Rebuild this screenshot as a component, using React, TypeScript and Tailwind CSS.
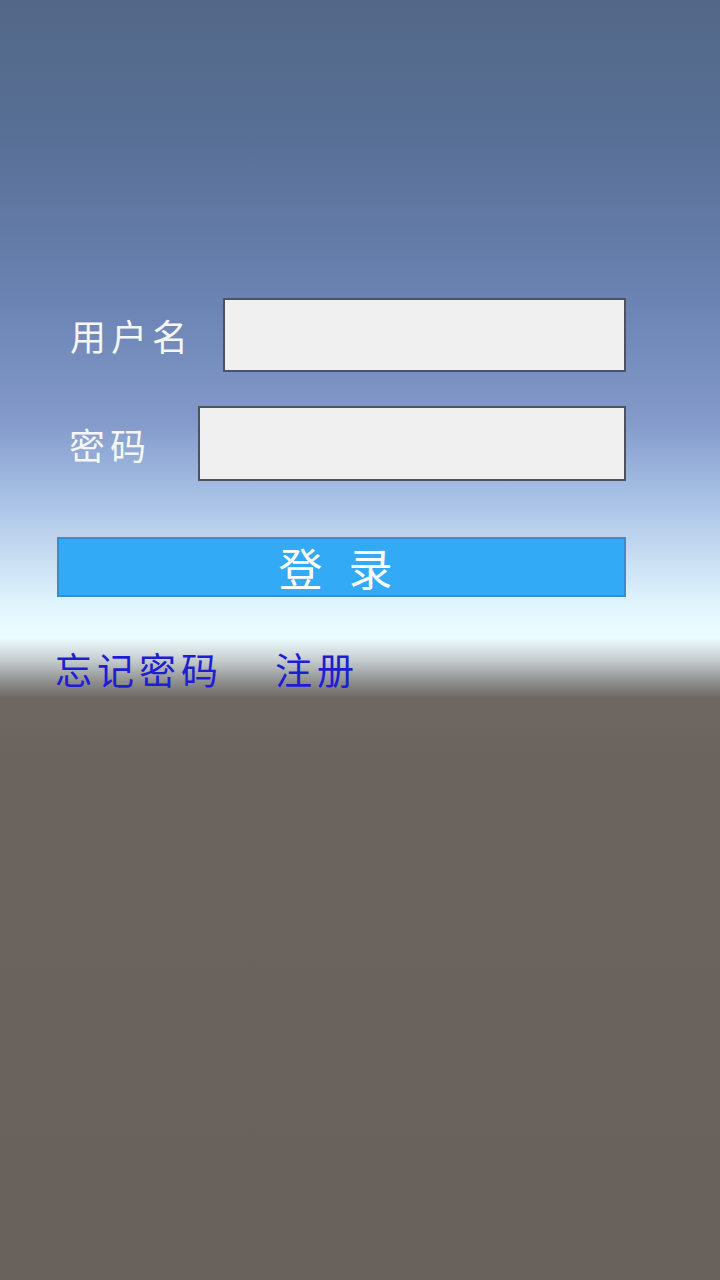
import React from 'react';

const FONT = "font-['Noto_Sans_CJK_SC','Noto_Sans',sans-serif]";

export default function App() {
  return (
    <div
      className={`${FONT} w-[720px] h-[1280px] bg-[linear-gradient(to_bottom,#536888_0px,#587096_140px,#6b83b2_300px,#8299c9_420px,#a9c2e6_500px,#c9def2_560px,#e2f7fd_610px,#edfcff_638px,#c6cdcf_660px,#8f8f8e_682px,#6e6863_698px,#6b635e_760px,#68615c_1280px)]`}
    >
      <div className="flex flex-col pt-[298px] pl-[57px] pr-[94px]">
        {/* Username */}
        <div className="flex items-center">
          <div className="w-[166px] pl-[13px] text-[36px] leading-none tracking-[5px] text-[#f4f6f8]">用户名</div>
          <input className="flex-1 h-[74px] bg-[#f0f0f0] border-2 border-[#4d535a] outline-none" />
        </div>

        {/* Password */}
        <div className="flex items-center mt-[34px]">
          <div className="w-[141px] pl-[12px] text-[36px] leading-none tracking-[5px] text-[#f4f6f8]">密码</div>
          <input type="password" className="flex-1 h-[75px] bg-[#f0f0f0] border-2 border-[#4d535a] outline-none" />
        </div>

        {/* Login button */}
        <button className="mt-[56px] h-[60px] w-full bg-[#33aaf6] border-2 border-[#3c8ccb] text-white text-[44px] leading-none flex items-center justify-center">
          <span className="-ml-[12px]">登</span>
          <span className="ml-[26px]">录</span>
        </button>

        {/* Links */}
        <div className="mt-[54px] flex items-center text-[37px] leading-none text-[#1d1dd2]">
          <span className="-ml-[2px] tracking-[5px]">忘记密码</span>
          <span className="ml-[52px] tracking-[5px]">注册</span>
        </div>
      </div>
    </div>
  );
}
